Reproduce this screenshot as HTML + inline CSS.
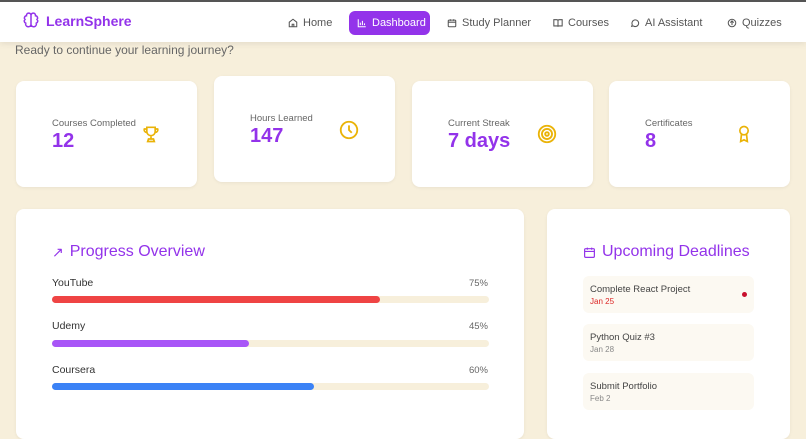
<!DOCTYPE html>
<html><head><style>
*{box-sizing:border-box;margin:0;padding:0}
body{width:806px;height:424px;overflow:hidden;background:#f7efdb;font-family:"Liberation Sans",sans-serif;position:relative}
.nav{position:absolute;left:0;top:0;width:806px;height:42px;background:#fff;border-top:2px solid #555;box-shadow:0 2px 6px rgba(0,0,0,.08)}
.logo{position:absolute;left:22px;top:10px;display:flex;align-items:center;gap:6px;color:#9333ea;font-weight:bold;font-size:14px}
.nl{position:absolute;top:9px;height:24px;font-size:11px;color:#555;display:flex;align-items:center;gap:5px;white-space:nowrap}
.nl svg{flex:none}
.act{background:#9333ea;color:#fff;border-radius:6px;padding:0 8px}
.sub{position:absolute;left:15px;top:43px;font-size:12px;color:#666}
.card{position:absolute;background:#fff;border-radius:8px;box-shadow:0 1px 3px rgba(0,0,0,.06)}
.lab{position:absolute;left:36px;font-size:9.5px;color:#666}
.val{position:absolute;left:36px;font-size:20px;font-weight:bold;color:#9333ea}
.ic{position:absolute}
.h{position:absolute;font-size:16px;color:#9333ea;display:flex;align-items:center;gap:6px}
.bl{position:absolute;left:36px;font-size:10.5px;color:#333}
.bp{position:absolute;right:36px;font-size:9.5px;color:#666}
.tr{position:absolute;left:36px;width:437px;height:7px;border-radius:4px;background:#f7efdb}
.tr div{height:7px;border-radius:4px}
.dl{position:absolute;left:36px;width:171px;height:37px;background:#fcf9f2;border-radius:6px}
.dl b{position:absolute;left:7px;top:8px;font-weight:normal;font-size:9.5px;color:#444}
.dl i{position:absolute;left:7px;top:21px;font-style:normal;font-size:8px;color:#888}
</style></head><body>
<div class="nav">
<div class="logo"><svg width="18" height="18" viewBox="0 0 24 24" fill="none" stroke="#9333ea" stroke-width="2"><path d="M12 4a3 3 0 0 0-6 1 3 3 0 0 0-2 5 3 3 0 0 0 1 5 3 3 0 0 0 7 2zM12 4a3 3 0 0 1 6 1 3 3 0 0 1 2 5 3 3 0 0 1-1 5 3 3 0 0 1-7 2zM12 4v16"/></svg>LearnSphere</div>
<div class="nl" style="left:288px"><svg width="10" height="10" viewBox="0 0 24 24" fill="none" stroke="#555" stroke-width="2.5"><path d="M3 10l9-7 9 7v11H3zM10 21v-6h4v6"/></svg>Home</div>
<div class="nl act" style="left:349px;width:81px"><svg width="10" height="10" viewBox="0 0 24 24" fill="none" stroke="#fff" stroke-width="2.5"><path d="M3 3v18h18M8 17v-6M13 17V7M18 17v-4"/></svg>Dashboard</div>
<div class="nl" style="left:447px"><svg width="10" height="10" viewBox="0 0 24 24" fill="none" stroke="#555" stroke-width="2.5"><rect x="3" y="5" width="18" height="16" rx="2"/><path d="M3 10h18M8 3v4M16 3v4"/></svg>Study Planner</div>
<div class="nl" style="left:553px"><svg width="10" height="10" viewBox="0 0 24 24" fill="none" stroke="#555" stroke-width="2.5"><path d="M2 4h7a3 3 0 0 1 3 3v14a2 2 0 0 0-2-2H2zM22 4h-7a3 3 0 0 0-3 3v14a2 2 0 0 1 2-2h8z"/></svg>Courses</div>
<div class="nl" style="left:630px"><svg width="10" height="10" viewBox="0 0 24 24" fill="none" stroke="#555" stroke-width="2.5"><path d="M4 20l1.5-4A8 8 0 1 1 8 19z"/></svg>AI Assistant</div>
<div class="nl" style="left:727px"><svg width="10" height="10" viewBox="0 0 24 24" fill="none" stroke="#555" stroke-width="2.5"><circle cx="12" cy="12" r="9"/><path d="M12 7v10M8 11l4-4 4 4"/></svg>Quizzes</div>
</div>
<div class="sub">Ready to continue your learning journey?</div>

<div class="card" style="left:16px;top:81px;width:181px;height:106px"><div class="lab" style="top:37px">Courses Completed</div><div class="val" style="top:49px">12</div>
<svg class="ic" style="left:125px;top:43px" width="20" height="20" viewBox="0 0 24 24" fill="none" stroke="#eab308" stroke-width="2"><path d="M7 4h10v5a5 5 0 0 1-10 0zM7 6H4a3 3 0 0 0 3 4M17 6h3a3 3 0 0 1-3 4M12 14v4M8 21h8l-1-3H9z"/></svg></div>
<div class="card" style="left:214px;top:76px;width:181px;height:106px"><div class="lab" style="top:37px">Hours Learned</div><div class="val" style="top:49px">147</div>
<svg class="ic" style="left:124px;top:43px" width="22" height="22" viewBox="0 0 24 24" fill="none" stroke="#eab308" stroke-width="2"><circle cx="12" cy="12" r="9"/><path d="M12 7v5l3 3"/></svg></div>
<div class="card" style="left:412px;top:81px;width:181px;height:106px"><div class="lab" style="top:37px">Current Streak</div><div class="val" style="top:49px">7 days</div>
<svg class="ic" style="left:124px;top:42px" width="22" height="22" viewBox="0 0 24 24" fill="none" stroke="#eab308" stroke-width="2"><circle cx="12" cy="12" r="9"/><circle cx="12" cy="12" r="5.5"/><circle cx="12" cy="12" r="2"/></svg></div>
<div class="card" style="left:609px;top:81px;width:181px;height:106px"><div class="lab" style="top:37px">Certificates</div><div class="val" style="top:49px">8</div>
<svg class="ic" style="left:125px;top:42px" width="20" height="22" viewBox="0 0 24 24" fill="none" stroke="#eab308" stroke-width="2"><circle cx="12" cy="8" r="5"/><path d="M9 12l-1 9 4-2 4 2-1-9"/></svg></div>

<div class="card" style="left:16px;top:209px;width:508px;height:230px">
<div class="h" style="left:36px;top:34px"><span style="font-size:14px">↗</span>Progress Overview</div>
<div class="bl" style="top:68px">YouTube</div><div class="bp" style="top:69px">75%</div>
<div class="tr" style="top:87px"><div style="width:75%;background:#ef4444"></div></div>
<div class="bl" style="top:111px">Udemy</div><div class="bp" style="top:112px">45%</div>
<div class="tr" style="top:131px"><div style="width:45%;background:#a855f7"></div></div>
<div class="bl" style="top:155px">Coursera</div><div class="bp" style="top:156px">60%</div>
<div class="tr" style="top:174px"><div style="width:60%;background:#3b82f6"></div></div>
</div>

<div class="card" style="left:547px;top:209px;width:243px;height:230px">
<div class="h" style="left:36px;top:34px"><svg width="13" height="13" viewBox="0 0 24 24" fill="none" stroke="#9333ea" stroke-width="2.2"><rect x="3" y="5" width="18" height="16" rx="2"/><path d="M3 10h18M8 3v4M16 3v4"/></svg>Upcoming Deadlines</div>
<div class="dl" style="top:67px"><b>Complete React Project</b><i style="color:#dc2626">Jan 25</i><span style="position:absolute;right:7px;top:16px;width:5px;height:5px;border-radius:50%;background:#c8102e"></span></div>
<div class="dl" style="top:115px"><b>Python Quiz #3</b><i>Jan 28</i></div>
<div class="dl" style="top:164px"><b>Submit Portfolio</b><i>Feb 2</i></div>
</div>
</body></html>
